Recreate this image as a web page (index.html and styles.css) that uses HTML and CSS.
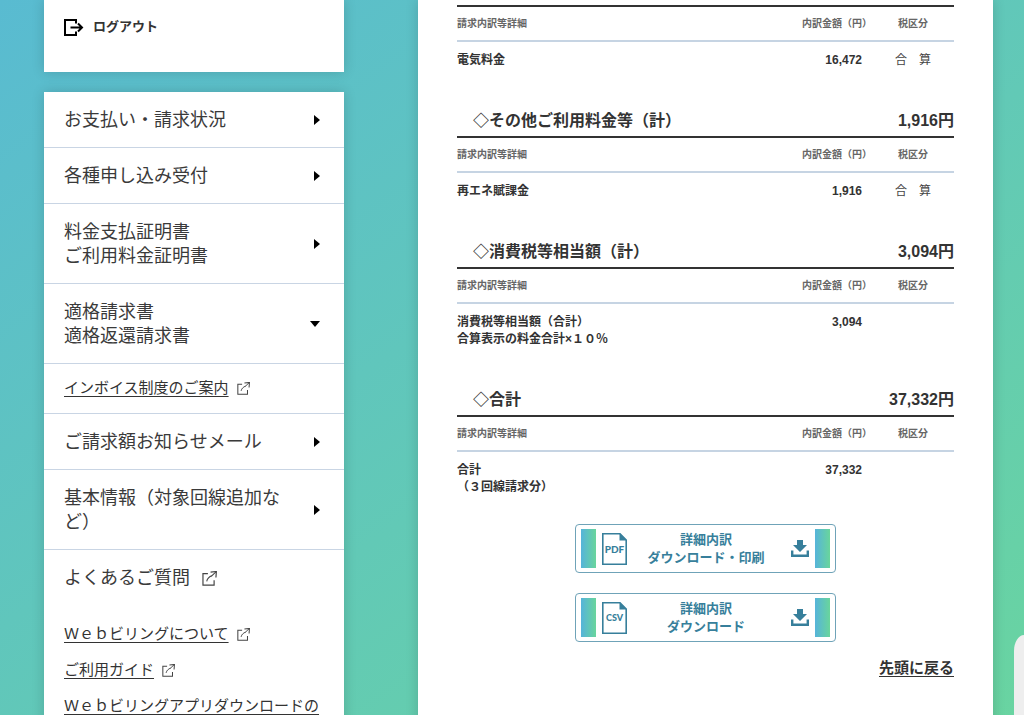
FILE: index.html
```html
<!DOCTYPE html>
<html lang="ja">
<head>
<meta charset="utf-8">
<meta name="viewport" content="width=device-width, initial-scale=1">
<title>Ｗｅｂビリング</title>
<link rel="stylesheet" href="styles.css">
</head>
<body>
<svg class="defs" aria-hidden="true">
  <symbol id="external" viewBox="0 0 14 14">
    <path d="M5.500 2.500H.9v10.600h10.400V8.600" fill="none" stroke="currentColor" stroke-width="1.100"/>
    <path d="M4.400 9.600C5 6.800 7 5.400 9 4.500" fill="none" stroke="currentColor" stroke-width="1"/>
    <path d="M8 1l5.400-.5-.4 5.500" fill="none" stroke="currentColor" stroke-width="1.100"/>
    <path d="M8.600 5l4.400-4.200" fill="none" stroke="currentColor" stroke-width="1"/>
  </symbol>
  <symbol id="download" viewBox="0 0 18 17">
    <path d="M6 0h6v5h4L9 12 2 5h4z" fill="currentColor"/>
    <path d="M1.200 10.500v5.200h15.600v-5.200" fill="none" stroke="currentColor" stroke-width="2.400"/>
  </symbol>
  <symbol id="file" viewBox="0 0 25 32">
    <path d="M18 .8H.8v30.400h23.400V7z" fill="#fff" stroke="currentColor" stroke-width="1.600"/>
    <path d="M17.500 0v7.500H25z" fill="currentColor"/>
  </symbol>
</svg>
<div class="page">
  <aside class="side">
    <div class="card account">
      <a class="logout" href="#">
        <svg class="logout-icon" viewBox="0 0 20 17" aria-hidden="true">
          <path d="M12 4.500V1H1v15h11v-3.500" fill="none" stroke="currentColor" stroke-width="2"/>
          <path d="M6.500 8.500H18M14 4.500l4 4-4 4" fill="none" stroke="currentColor" stroke-width="2"/>
        </svg>
        ログアウト
      </a>
    </div>
    <nav class="card menu">
      <button type="button" class="item"><span class="label">お支払い・請求状況</span><span class="arrow"></span></button>
      <button type="button" class="item"><span class="label">各種申し込み受付</span><span class="arrow"></span></button>
      <button type="button" class="item"><span class="label">料金支払証明書<br>ご利用料金証明書</span><span class="arrow"></span></button>
      <button type="button" class="item" aria-expanded="true"><span class="label">適格請求書<br>適格返還請求書</span><span class="arrow open"></span></button>
      <div class="sub"><a class="text-link" href="#">インボイス制度のご案内</a><svg class="ext" aria-hidden="true"><use href="#external"/></svg></div>
      <button type="button" class="item"><span class="label">ご請求額お知らせメール</span><span class="arrow"></span></button>
      <button type="button" class="item"><span class="label">基本情報（対象回線追加など）</span><span class="arrow"></span></button>
      <a class="item last" href="#">よくあるご質問<svg class="ext large" aria-hidden="true"><use href="#external"/></svg></a>
      <ul class="links">
        <li><a class="text-link" href="#">Ｗｅｂビリングについて</a><svg class="ext" aria-hidden="true"><use href="#external"/></svg></li>
        <li><a class="text-link" href="#">ご利用ガイド</a><svg class="ext" aria-hidden="true"><use href="#external"/></svg></li>
        <li><a class="text-link" href="#">Ｗｅｂビリングアプリダウンロードの</a></li>
      </ul>
    </nav>
  </aside>
  <main class="card detail">
    <section class="group">
      <table class="bill">
        <thead><tr><th>請求内訳等詳細</th><th class="amount">内訳金額（円）</th><th class="tax">税区分</th></tr></thead>
        <tbody><tr><td>電気料金</td><td class="amount">16,472</td><td class="tax">合　算</td></tr></tbody>
      </table>
    </section>
    <section class="group">
      <h2 class="heading"><span>◇その他ご利用料金等（計）</span><span>1,916円</span></h2>
      <table class="bill">
        <thead><tr><th>請求内訳等詳細</th><th class="amount">内訳金額（円）</th><th class="tax">税区分</th></tr></thead>
        <tbody><tr><td>再エネ賦課金</td><td class="amount">1,916</td><td class="tax">合　算</td></tr></tbody>
      </table>
    </section>
    <section class="group">
      <h2 class="heading"><span>◇消費税等相当額（計）</span><span>3,094円</span></h2>
      <table class="bill">
        <thead><tr><th>請求内訳等詳細</th><th class="amount">内訳金額（円）</th><th class="tax">税区分</th></tr></thead>
        <tbody><tr><td>消費税等相当額（合計）<br>合算表示の料金合計×１０％</td><td class="amount">3,094</td><td class="tax"></td></tr></tbody>
      </table>
    </section>
    <section class="group">
      <h2 class="heading"><span>◇合計</span><span>37,332円</span></h2>
      <table class="bill">
        <thead><tr><th>請求内訳等詳細</th><th class="amount">内訳金額（円）</th><th class="tax">税区分</th></tr></thead>
        <tbody><tr><td>合計<br>（３回線請求分）</td><td class="amount">37,332</td><td class="tax"></td></tr></tbody>
      </table>
    </section>
    <div class="downloads">
      <button type="button" class="download">
        <span class="stripe"></span>
        <span class="file"><svg class="file-shape" aria-hidden="true"><use href="#file"/></svg><span class="file-type">PDF</span></span>
        <span class="caption">詳細内訳<br>ダウンロード・印刷</span>
        <svg class="tray" aria-hidden="true"><use href="#download"/></svg>
        <span class="stripe"></span>
      </button>
      <button type="button" class="download">
        <span class="stripe"></span>
        <span class="file"><svg class="file-shape" aria-hidden="true"><use href="#file"/></svg><span class="file-type csv">CSV</span></span>
        <span class="caption">詳細内訳<br>ダウンロード</span>
        <svg class="tray" aria-hidden="true"><use href="#download"/></svg>
        <span class="stripe"></span>
      </button>
    </div>
    <p class="back"><a href="#">先頭に戻る</a></p>
  </main>
</div>
<div class="side-tab"></div>
</body>
</html>
```
FILE: styles.css
```css
* {
  box-sizing: border-box;
}

body {
  margin: 0;
  height: 100vh;
  overflow: hidden;
  background: linear-gradient(145deg, #59bbd1, #69d4a1);
  color: #333;
  font-family: "Liberation Sans", "Noto Sans CJK JP", sans-serif;
}

a {
  color: inherit;
}

button {
  margin: 0;
  border: 0;
  background: none;
  color: inherit;
  font: inherit;
}

.defs {
  position: absolute;
  width: 0;
  height: 0;
}

.page {
  display: flex;
  gap: 74px;
  min-height: 100%;
  padding: 0 31px 0 44px;
}

.card {
  background: #fff;
  box-shadow: 0 0 12px rgba(0, 0, 0, 0.16);
}

.side {
  display: flex;
  flex: 0 0 300px;
  flex-direction: column;
  gap: 20px;
}

.account {
  padding: 16px 20px 34px;
}

.logout {
  display: flex;
  align-items: center;
  gap: 9px;
  font-size: 13px;
  font-weight: 700;
  line-height: 22px;
  text-decoration: none;
}

.logout-icon {
  width: 20px;
  height: 17px;
  color: #000;
}

.menu {
  flex: 1 0 auto;
}

.item {
  display: flex;
  align-items: center;
  gap: 26px;
  width: 100%;
  padding: 16px 24px 15px 20px;
  border-bottom: 1px solid #c9d5e4;
  color: #3a3a3a;
  font-size: 18px;
  line-height: 24px;
  text-align: left;
  text-decoration: none;
}

.item.last {
  gap: 12px;
  border-bottom: 0;
}

.label {
  flex: 1;
}

.arrow {
  width: 6px;
  height: 10px;
  margin-left: 4px;
  background: #000;
  clip-path: polygon(0 0, 100% 50%, 0 100%);
}

.arrow.open {
  width: 10px;
  height: 6px;
  margin-left: 0;
  clip-path: polygon(0 0, 100% 0, 50% 100%);
}

.sub {
  display: flex;
  align-items: center;
  gap: 8px;
  padding: 13px 20px 14px;
  border-bottom: 1px solid #c9d5e4;
  font-size: 15px;
  line-height: 22px;
}

.text-link {
  text-underline-offset: 3px;
}

.ext {
  width: 13px;
  height: 13px;
  color: #444;
}

.ext.large {
  width: 15px;
  height: 15px;
}

.links {
  display: grid;
  gap: 14px;
  margin: 0;
  padding: 18px 20px;
  font-size: 15px;
  line-height: 22px;
  list-style: none;
}

.links li {
  display: flex;
  align-items: center;
  gap: 8px;
}

.detail {
  flex: 1;
  padding: 5px 39px 20px;
}

.group {
  margin-bottom: 40px;
}

.heading {
  display: flex;
  justify-content: space-between;
  margin: 0;
  padding: 0 0 3px 16px;
  font-size: 16px;
  line-height: 24px;
}

.bill {
  width: 100%;
  border-top: 2px solid #333;
  border-spacing: 0;
  font-size: 12px;
  font-weight: 700;
  line-height: 17px;
}

.bill th {
  height: 35px;
  padding: 0;
  border-bottom: 2px solid #c6d4e3;
  color: #666;
  font-size: 10px;
  text-align: left;
}

.bill td {
  padding: 10px 0 0;
  vertical-align: top;
}

.bill .amount {
  width: 90px;
  text-align: right;
}

.bill td.amount {
  padding-right: 10px;
}

.bill .tax {
  width: 82px;
  text-align: center;
}

.bill td.tax {
  color: #444;
  font-weight: 400;
}

.downloads {
  display: grid;
  justify-content: center;
  gap: 20px;
  margin-top: -12px;
}

.download {
  display: flex;
  align-items: center;
  width: 261px;
  padding: 4px 5px;
  border: 1px solid #6fa3b8;
  border-radius: 4px;
  color: #377f9b;
  font-size: 13px;
  font-weight: 700;
  line-height: 18px;
}

.stripe {
  align-self: stretch;
  width: 15px;
  min-height: 39px;
  background: linear-gradient(to right, #56b4da, #69d59c);
}

.file {
  position: relative;
  display: grid;
  place-items: center;
  width: 25px;
  height: 32px;
  margin-left: 6px;
}

.file-shape {
  position: absolute;
  inset: 0;
  width: 25px;
  height: 32px;
}

.file-type {
  position: relative;
  font-family: Lato, sans-serif;
  font-size: 10px;
  font-weight: 900;
  line-height: 12px;
}

.file-type.csv {
  font-size: 9px;
}

.caption {
  flex: 1;
  margin-right: 6px;
  text-align: center;
}

.tray {
  width: 18px;
  height: 17px;
  margin-right: 6px;
}

.back {
  margin: 15px 0 0;
  font-size: 15px;
  font-weight: 700;
  line-height: 22px;
  text-align: right;
}

.back a {
  text-underline-offset: 3px;
}

.side-tab {
  position: fixed;
  right: 0;
  bottom: 0;
  width: 10px;
  height: 80px;
  border-top-left-radius: 10px 16px;
  background: #eee;
}
```
